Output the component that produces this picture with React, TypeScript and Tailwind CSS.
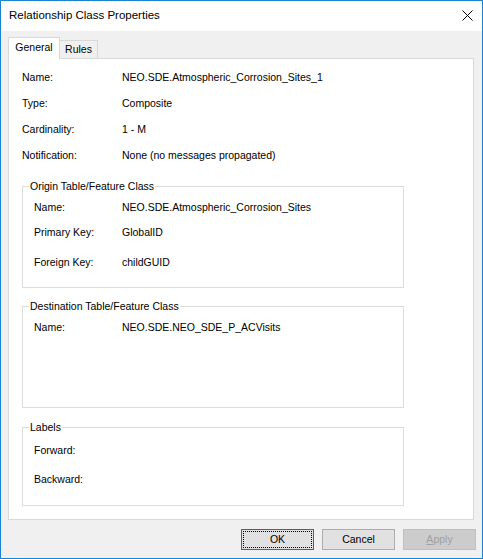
import React from 'react';

type Row = { label: string; value?: string; gap: string };

const generalRows: Row[] = [
  { label: 'Name:', value: 'NEO.SDE.Atmospheric_Corrosion_Sites_1', gap: '' },
  { label: 'Type:', value: 'Composite', gap: '' },
  { label: 'Cardinality:', value: '1 - M', gap: '' },
  { label: 'Notification:', value: 'None (no messages propagated)', gap: '' },
];

const originRows: Row[] = [
  { label: 'Name:', value: 'NEO.SDE.Atmospheric_Corrosion_Sites', gap: 'mt-[8px]' },
  { label: 'Primary Key:', value: 'GlobalID', gap: 'mt-[12px]' },
  { label: 'Foreign Key:', value: 'childGUID', gap: 'mt-[17px]' },
];

const destinationRows: Row[] = [
  { label: 'Name:', value: 'NEO.SDE.NEO_SDE_P_ACVisits', gap: 'mt-[8px]' },
];

const labelRows: Row[] = [
  { label: 'Forward:', gap: 'mt-[10px]' },
  { label: 'Backward:', gap: 'mt-[16px]' },
];

function GroupBox({
  title,
  rows,
  className,
}: {
  title: string;
  rows: Row[];
  className: string;
}) {
  return (
    <fieldset className={`w-[382px] border border-[#dcdcdc] ${className}`}>
      <legend className="ml-[6px] px-[1px] leading-[13px]">{title}</legend>
      <div className="pl-[11px]">
        {rows.map((r) => (
          <div key={r.label} className={`flex h-[13px] leading-[13px] ${r.gap}`}>
            <span className="w-[88px] shrink-0">{r.label}</span>
            {r.value && <span>{r.value}</span>}
          </div>
        ))}
      </div>
    </fieldset>
  );
}

function DialogButton({
  children,
  kind = 'normal',
}: {
  children: React.ReactNode;
  kind?: 'default' | 'normal' | 'disabled';
}) {
  if (kind === 'default') {
    return (
      <div className="w-[73px] h-[21px] border border-[#0078d7] bg-[#e1e1e1] p-[1px]">
        <div className="h-full border border-dotted border-black flex items-center justify-center">
          {children}
        </div>
      </div>
    );
  }
  if (kind === 'disabled') {
    return (
      <div className="w-[73px] h-[21px] border border-[#bfbfbf] bg-[#cccccc] text-[#a0a0a0] flex items-center justify-center">
        {children}
      </div>
    );
  }
  return (
    <div className="w-[73px] h-[21px] border border-[#adadad] bg-[#e1e1e1] flex items-center justify-center">
      {children}
    </div>
  );
}

export default function App() {
  return (
    <div className="w-[483px] h-[559px] border border-[#1883d7] bg-[#f0f0f0] flex flex-col text-[10.5px] text-black font-['Liberation_Sans',Arial,sans-serif]">
      {/* title bar */}
      <div className="h-[30px] shrink-0 bg-white flex items-center justify-between pl-[8px] pr-[9px]">
        <span className="text-[11.5px]">Relationship Class Properties</span>
        <svg width="11" height="11" viewBox="0 0 11 11" className="mb-[1px]">
          <path d="M0.5 0.5 L10.5 10.5 M10.5 0.5 L0.5 10.5" stroke="#000" strokeWidth="1" />
        </svg>
      </div>

      <div className="flex-1 flex flex-col px-[7px] pt-[6px]">
        {/* tabs */}
        <div className="flex items-end h-[21px]">
          <div className="relative z-10 w-[52px] h-[22px] mb-[-1px] bg-white border border-b-0 border-[#d9d9d9] flex items-center justify-center pb-[2px]">
            General
          </div>
          <div className="w-[38px] h-[18px] border border-l-0 border-b-0 border-[#d9d9d9] flex items-center justify-center">
            Rules
          </div>
        </div>

        {/* tab page */}
        <div className="w-[466px] h-[462px] bg-white border border-[#d9d9d9] pl-[13px] pt-[6px]">
          {generalRows.map((r) => (
            <div key={r.label} className="flex h-[26px] items-center">
              <span className="w-[100px] shrink-0">{r.label}</span>
              <span>{r.value}</span>
            </div>
          ))}

          <GroupBox title="Origin Table/Feature Class" rows={originRows} className="h-[108px] mt-[11px]" />
          <GroupBox title="Destination Table/Feature Class" rows={destinationRows} className="h-[108px] mt-[12px]" />
          <GroupBox title="Labels" rows={labelRows} className="h-[85px] mt-[13px]" />
        </div>

        {/* buttons */}
        <div className="flex justify-end gap-[8px] mt-[9px] mr-[-1px]">
          <DialogButton kind="default">OK</DialogButton>
          <DialogButton>Cancel</DialogButton>
          <DialogButton kind="disabled">
            <span>
              <span className="underline">A</span>pply
            </span>
          </DialogButton>
        </div>
      </div>
    </div>
  );
}
